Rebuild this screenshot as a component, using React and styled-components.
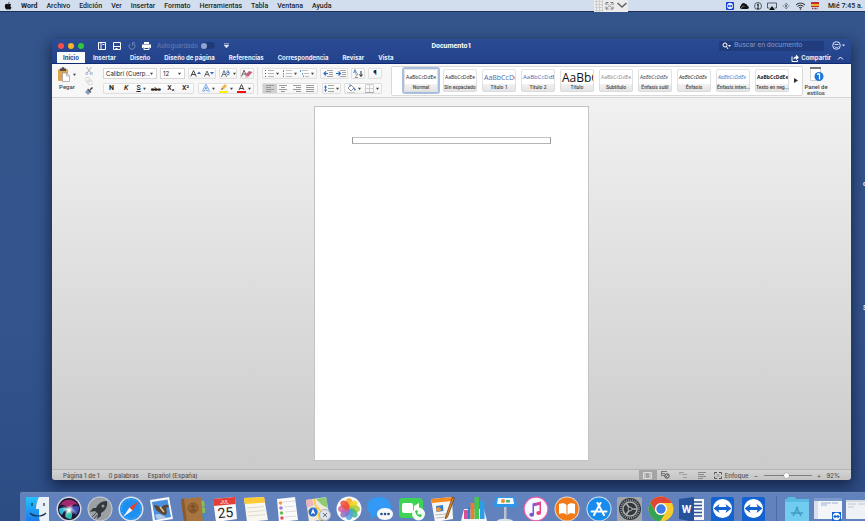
import styled, { createGlobalStyle, css } from 'styled-components';

const GlobalStyle = createGlobalStyle`
	* {
		box-sizing: border-box;
	}

	body {
		margin: 0;
		overflow: hidden;
		font-family: Roboto, 'Liberation Sans', sans-serif;
		font-size: 7px;
		color: #222;
	}

	button,
	input,
	select {
		font: inherit;
		color: inherit;
		margin: 0;
		padding: 0;
		border: 0;
		background: none;
	}

	svg {
		display: block;
		flex-shrink: 0;
	}
`;

const interFont = css`
	font-family: Inter, 'Liberation Sans', sans-serif;
`;

const Desktop = styled.div`
	position: relative;
	display: flex;
	flex-direction: column;
	height: 100vh;
	overflow: hidden;
	background: linear-gradient(#33558b, #33548c 60%, #2c4c84);
`;

const MenuBar = styled.header`
	display: flex;
	align-items: center;
	justify-content: space-between;
	height: 12px;
	flex-shrink: 0;
	padding-left: 4px;
	background: #d2deee;
	border-bottom: 1px solid #1d3058;
	color: #1b1e26;
	white-space: nowrap;
`;

const MenuList = styled.nav`
	display: flex;
	align-items: center;
	gap: 9px;
`;

const MenuItem = styled.button`
	font-weight: ${props => (props.$bold ? 700 : 500)};
	line-height: 10px;
`;

const StatusIcons = styled.div`
	display: flex;
	align-items: center;
	gap: 5px;
`;

const Clock = styled.span`
	width: 37px;
	margin-left: 4px;
	font-weight: 500;
`;

const FloatingBar = styled.div`
	position: absolute;
	top: 0;
	left: 594px;
	display: flex;
	align-items: center;
	width: 34px;
	height: 12px;
	background: #ececec;
`;

const DesktopLabel = styled.span`
	position: absolute;
	left: 863px;
	top: ${props => props.$top}px;
	color: #fff;
	font-weight: 600;
`;

const Window = styled.main`
	display: flex;
	flex-direction: column;
	flex: 1;
	min-height: 0;
	margin: 27px 14px 12px 52px;
	border-radius: 3px;
	overflow: hidden;
	box-shadow: 0 5px 14px 2px rgba(8, 16, 40, 0.6);
`;

const TitleBar = styled.div`
	display: grid;
	grid-template-columns: 1fr auto 1fr;
	align-items: center;
	height: 13px;
	flex-shrink: 0;
	padding: 0 6px;
	background: linear-gradient(#2a4c93, #26478f);
	color: #fff;
`;

const QuickAccess = styled.div`
	display: flex;
	align-items: center;
	gap: 6px;
`;

const Lights = styled.div`
	display: flex;
	gap: 4px;
	margin-right: 7px;
`;

const Light = styled.button`
	width: 6px;
	height: 6px;
	border-radius: 50%;
	background: ${props => props.$color};
`;

const IconButton = styled.button`
	display: flex;
	align-items: center;
	justify-content: center;
	width: 9px;
	height: 10px;
	opacity: ${props => (props.$dim ? 0.35 : 1)};
`;

const AutoSave = styled.label`
	display: flex;
	align-items: center;
	gap: 3px;
	margin-right: 3px;
	font-size: 6px;
	font-weight: 500;
	color: #5f7ab3;
	${interFont}
`;

const Toggle = styled.input`
	appearance: none;
	display: flex;
	align-items: center;
	width: 14px;
	height: 7px;
	border-radius: 4px;
	background: #203a78;

	&::before {
		content: '';
		width: 6px;
		height: 6px;
		border-radius: 50%;
		background: #8ea4d0;
	}
`;

const DocTitle = styled.h1`
	margin: 0;
	font-size: 7px;
	font-weight: 700;
`;

const TitleTools = styled.div`
	display: flex;
	align-items: center;
	justify-content: flex-end;
	gap: 8px;
`;

const SearchBox = styled.label`
	display: flex;
	align-items: center;
	gap: 3px;
	width: 105px;
	height: 10px;
	padding: 0 3px;
	border-radius: 1px;
	background: #203c7c;
`;

const SearchInput = styled.input`
	flex: 1;
	min-width: 0;
	line-height: 9px;
	outline: none;

	&::placeholder {
		color: #8297c4;
	}
`;

const TabBar = styled.div`
	display: flex;
	align-items: flex-end;
	justify-content: space-between;
	height: 12px;
	flex-shrink: 0;
	padding: 0 6px 0 5px;
	background: linear-gradient(#26478f, #22418a);
	color: #eef2fb;
	border-bottom: 1px solid #0f2a74;
	font-size: 6px;
	font-weight: 700;
	${interFont}
`;

const Tabs = styled.div`
	display: flex;
	gap: 14px;
`;

const Tab = styled.button`
	height: 11px;
	line-height: 11px;
	white-space: nowrap;

	${props =>
		props.$active &&
		css`
			margin-right: -6px;
			padding: 0 6px;
			background: #fafafa;
			color: #26468e;
		`}
`;

const ShareButton = styled.button`
	display: flex;
	align-items: center;
	gap: 2px;
	height: 11px;
`;

const Ribbon = styled.section`
	display: flex;
	align-items: center;
	height: 34px;
	flex-shrink: 0;
	padding: 0 22px 0 5px;
	background: #f7f7f7;
	border-bottom: 1px solid #d4d4d4;
`;

const BigButton = styled.button`
	display: flex;
	flex-direction: column;
	align-items: center;
	align-self: flex-start;
	gap: 2px;
	width: ${props => props.$width}px;
	margin-top: 3px;
	font-size: 6px;
	line-height: 6px;
	font-weight: 500;
	color: #444;
	white-space: nowrap;
`;

const BigIcon = styled.span`
	display: flex;
	align-items: center;
	gap: 3px;
`;

const ClipTools = styled.div`
	display: flex;
	flex-direction: column;
	justify-content: space-between;
	height: 30px;
	margin: 0 10px 0 7px;
`;

const ToolColumn = styled.div`
	display: flex;
	flex-direction: column;
	gap: 4px;
`;

const ToolRow = styled.div`
	display: flex;
	justify-content: space-between;
	gap: 3px;
`;

const ToolGroup = styled.div`
	display: flex;
	align-items: center;
	justify-content: space-around;
	width: ${props => props.$width}px;
	height: 11px;
	border: 1px solid #e0e0e0;
	border-radius: 1px;
	background: linear-gradient(#fff, #f4f4f4);
`;

const ToolButton = styled.button`
	display: flex;
	align-items: center;
	justify-content: center;
	gap: 2px;
	flex: 1;
	height: 9px;
	background: ${props => (props.$active ? '#d0d0d0' : 'none')};
	font-size: ${props => (props.$small ? 6 : 7)}px;
	font-weight: ${props => (props.$bold ? 700 : 500)};
	line-height: 9px;
`;

const SelectWrap = styled.span`
	display: flex;
	align-items: center;
	width: ${props => props.$width}px;
	height: 11px;
	padding: 0 3px 0 2px;
	border: 1px solid #d6d6d6;
	background: #fff;
`;

const Select = styled.select`
	appearance: none;
	flex: 1;
	min-width: 0;
	font-size: 6px;
	${interFont}
`;

const Divider = styled.div`
	width: 1px;
	height: 28px;
	margin: 0 4px 0 3px;
	background: #dedede;
`;

const Gallery = styled.div`
	display: flex;
	align-items: center;
	flex: 1;
	min-width: 0;
	height: 30px;
	margin: 0 0 0 9px;
	padding: 0 2px 0 10px;
	border: 1px solid #d9d9d9;
	border-radius: 2px;
	background: #fff;
`;

const StyleList = styled.div`
	display: grid;
	grid-template-columns: repeat(10, 1fr);
	gap: 1px;
	flex: 1;
	min-width: 0;
`;

const StyleCard = styled.button`
	display: flex;
	flex-direction: column;
	height: 27px;
	min-width: 0;
	overflow: hidden;
	border: 2px solid ${props => (props.$active ? '#a9bfe0' : 'transparent')};
	border-radius: 3px;
`;

const Preview = styled.span`
	display: flex;
	align-items: center;
	align-self: stretch;
	flex: 1;
	padding-left: 1px;
	overflow: hidden;
	border: 1px solid #e2e2e2;
	border-bottom: 0;
	border-radius: 2px 2px 0 0;
	font-family: 'Open Sans', sans-serif;
	font-size: ${props => props.$size}px;
	font-weight: ${props => (props.$bold ? 700 : 500)};
	font-style: ${props => (props.$italic ? 'italic' : 'normal')};
	color: ${props => props.$color};
	line-height: 15px;
	white-space: nowrap;
`;

const StyleName = styled.span`
	align-self: stretch;
	height: 8px;
	border: 1px solid #dcdcdc;
	border-top: 0;
	border-radius: 0 0 2px 2px;
	background: linear-gradient(#f2f2f2, #e4e4e4);
	font-size: 5px;
	font-weight: 500;
	line-height: 7px;
	text-align: center;
	color: #444;
	white-space: nowrap;
`;

const Canvas = styled.section`
	display: flex;
	justify-content: center;
	flex: 1;
	min-height: 0;
	padding: 8px 0;
	background: linear-gradient(#f1f1f1, #cbcbcb);
`;

const Page = styled.article`
	width: 275px;
	padding: 30px 37px;
	background: #fff;
	border: 1px solid #c4c4c4;
`;

const TextFrame = styled.div`
	height: 7px;
	border: 1px solid #999;
	border-top-color: #c2c2c2;
	border-bottom-color: #b4b4b4;
`;

const StatusBar = styled.footer`
	display: flex;
	align-items: center;
	justify-content: space-between;
	height: 11px;
	flex-shrink: 0;
	padding: 0 11px;
	background: linear-gradient(#d3d3d3, #c4c4c4);
	border-top: 1px solid #b4b4b4;
	font-size: 6px;
	font-weight: 500;
	color: #505050;
	${interFont}
`;

const StatusGroup = styled.div`
	display: flex;
	align-items: center;
	gap: ${props => props.$gap}px;
`;

const ViewButton = styled.button`
	display: flex;
	align-items: center;
	justify-content: center;
	gap: 3px;
	min-width: 18px;
	height: 10px;
	background: ${props => (props.$active ? '#a4a4a4' : 'none')};
`;

const ZoomSlider = styled.input`
	appearance: none;
	width: 48px;
	height: 8px;

	&::-webkit-slider-runnable-track {
		height: 1px;
		background: #808080;
	}

	&::-webkit-slider-thumb {
		appearance: none;
		width: 5px;
		height: 5px;
		margin-top: -2px;
		border-radius: 50%;
		background: #fff;
		box-shadow: 0 0 1px #555;
	}
`;

const Dock = styled.nav`
	position: relative;
	display: flex;
	height: 29px;
	flex-shrink: 0;
	margin-left: 20px;
	padding: 3px 0 0 2px;
	overflow: hidden;
	border-top: 1px solid #7088b8;
	border-radius: 2px 0 0 0;
	background: #6182bd;
`;

const DockApps = styled.div`
	display: grid;
	grid-template-columns: repeat(24, 1fr);
	flex: 1;
`;

const DockTray = styled.div`
	display: flex;
	gap: 4px;
	width: 89px;
	padding-left: 7px;
	border-left: 1px solid #4d6ba3;
	margin-left: 6px;
`;

const DockIcon = styled.button`
	display: flex;
	justify-content: center;
	height: 26px;
`;

const Caret = ({ color = '#444', size = 3 }) => (
	<svg width={size} height={size} viewBox="0 0 4 4">
		<path d="M0 1h4L2 4z" fill={color} />
	</svg>
);

const icons = {
	apple: (
		<svg width="8" height="8" viewBox="0 0 16 18">
			<path
				d="M11.5 0c.1 1.7-1.5 3.7-3.3 3.7C8 2 9.7.2 11.5 0zM8.3 5c.8 0 1.9-1 3.5-1 1.4 0 2.6.8 3.3 1.8-2.7 1.7-2.2 5.2.7 6.4-.7 2-2.3 4.800-4 4.800-1.300 0-1.800-.8-3.300-.8S6.600 17 5.400 17C3.300 17 .9 13 .9 9.500.9 6 3 4.100 5.100 4.100 6.600 4.100 7.500 5 8.300 5z"
				fill="#111"
			/>
		</svg>
	),
	teamviewer: (
		<svg width="8" height="8" viewBox="0 0 16 16">
			<rect width="16" height="16" rx="2" fill="#123fd4" />
			<circle cx="8" cy="8" r="6" fill="#fff" />
			<path d="M2.500 8l4-3v2h3V5l4 3-4 3V9h-3v2z" fill="#123fd4" />
		</svg>
	),
	cloud: (
		<svg width="10" height="8" viewBox="0 0 20 14">
			<path d="M4 13a4 4 0 0 1 0-7 5 5 0 0 1 9-3 4 4 0 0 1 4 4c4 1 3 6 0 6z" fill="#111" />
			<path d="M5 12c0-5 4-6 6-4" stroke="#d2deee" fill="none" />
		</svg>
	),
	info: (
		<svg width="8" height="8" viewBox="0 0 16 16">
			<circle cx="8" cy="8" r="7" fill="none" stroke="#333" strokeWidth="1.5" />
			<path d="M8 3v10M6 6h4M6.500 13h3" stroke="#222" strokeWidth="2" />
		</svg>
	),
	airplay: (
		<svg width="10" height="8" viewBox="0 0 20 16">
			<path d="M5 12H1V2h18v10h-4" fill="none" stroke="#333" strokeWidth="1.5" />
			<path d="M10 8l6 8H4z" fill="#111" />
		</svg>
	),
	bluetooth: (
		<svg width="8" height="8" viewBox="0 0 16 16">
			<path d="M5 5l6 6-3 3V2l3 3-6 6M1 8h3M12 8h3" fill="none" stroke="#555" strokeWidth="1.3" />
		</svg>
	),
	wifi: (
		<svg width="11" height="8" viewBox="0 0 20 16">
			<path d="M1 6c5-5 13-5 18 0M4 9c4-3.500 8-3.500 12 0M7 12c2-2 4-2 6 0" fill="none" stroke="#222" strokeWidth="2" />
			<circle cx="10" cy="14" r="1.5" fill="#222" />
		</svg>
	),
	flag: (
		<svg width="8" height="8" viewBox="0 0 8 8">
			<path d="M0 0h8v2H0zM0 4h8v1H0z" fill="#c42b31" />
			<path d="M0 2h8v2H0z" fill="#e6b52c" />
			<path d="M1 6.500h6" stroke="#8f3c47" strokeWidth="1.5" strokeDasharray="1 .5" />
		</svg>
	),
	tools: (
		<svg width="34" height="12" viewBox="0 0 34 12">
			<path d="M1 1.500h8M1 4.500h8M1 7.500h8M1 10.500h8M2.500 0v12M5.500 0v12M8.500 0v12" stroke="#cfcfcf" />
			<path d="M12 5V2.500h2.500M16.500 2.500H19V5M19 6.500V9h-2.500M14.500 9H12V6.500" fill="none" stroke="#777" />
			<path d="M13 3.500l5 4.500M18 3.500L13 8" stroke="#aaa" />
			<path d="M23.500 3l4.500 4 4.500-4" fill="none" stroke="#666" strokeWidth="1.6" />
		</svg>
	),
	panel: (
		<svg width="8" height="8" viewBox="0 0 8 8">
			<path d="M.5.5h7v7h-7zM3 .5v7M4.500 2.500h2" fill="none" stroke="#fff" />
		</svg>
	),
	save: (
		<svg width="8" height="8" viewBox="0 0 8 8">
			<path d="M.5.5h7v7h-7z" fill="none" stroke="#fff" />
			<path d="M1 4h6v1H1zM2.500 6h2v2h-2z" fill="#fff" />
		</svg>
	),
	undo: (
		<svg width="8" height="8" viewBox="0 0 8 8">
			<path d="M2 2a3 3 0 1 0 4 0M4.500 3.500V.8H7" fill="none" stroke="#fff" />
		</svg>
	),
	print: (
		<svg width="9" height="8" viewBox="0 0 9 8">
			<path d="M2 0h5v2H2zM0 2.500h9V6H7.500V5h-6v1H0z" fill="#fff" />
			<path d="M2 5.500h5v2H2z" fill="none" stroke="#fff" />
		</svg>
	),
	search: (
		<svg width="9" height="8" viewBox="0 0 9 8">
			<circle cx="3" cy="3" r="2" fill="none" stroke="#fff" />
			<path d="M4.500 4.500L6 7" stroke="#fff" />
			<path d="M6 3h3L7.500 5z" fill="#fff" />
		</svg>
	),
	smile: (
		<svg width="13" height="9" viewBox="0 0 13 9">
			<circle cx="4.500" cy="4.500" r="3.800" fill="none" stroke="#dfe6f6" />
			<path d="M2.500 3.500h4M2.500 5.500c1 1.500 3 1.500 4 0" fill="none" stroke="#dfe6f6" strokeWidth=".9" />
			<path d="M10 3.500h3l-1.500 2z" fill="#dfe6f6" />
		</svg>
	),
	share: (
		<svg width="8" height="8" viewBox="0 0 8 8">
			<path d="M1 2.500v5h5.500V6" fill="none" stroke="#fff" />
			<path d="M2.500 5.500c0-2 1-3 2.500-3V.5L8 3.500l-3 2.500V4.500c-1 0-2 0-2.500 1z" fill="#fff" />
		</svg>
	),
	paste: (
		<svg width="12" height="15" viewBox="0 0 12 15">
			<rect x="0" y="2" width="10" height="12" rx="1" fill="#e0a54c" />
			<path d="M2 1.500h1.500a1.500 1.500 0 0 1 3 0H8V4H2z" fill="#4d4d4d" />
			<path d="M4.500 6h4l3 3v5.500h-7z" fill="#fff" stroke="#999" strokeWidth=".7" />
			<path d="M8.500 6v3h3" fill="none" stroke="#999" strokeWidth=".7" />
		</svg>
	),
	cut: (
		<svg width="8" height="8" viewBox="0 0 8 8">
			<path d="M1.500 0l4 5.500M6.500 0l-4 5.500" stroke="#aaa" strokeWidth=".9" />
			<circle cx="1.700" cy="6.500" r="1.100" fill="none" stroke="#83a4cb" strokeWidth=".8" />
			<circle cx="6.300" cy="6.500" r="1.100" fill="none" stroke="#83a4cb" strokeWidth=".8" />
		</svg>
	),
	copy: (
		<svg width="8" height="8" viewBox="0 0 8 8">
			<path d="M1 .5h3l1 1V5H1zM3 3h3l1 1v3.500H3z" fill="#fafafa" stroke="#ccc" strokeWidth=".7" />
		</svg>
	),
	brush: (
		<svg width="8" height="8" viewBox="0 0 8 8">
			<path d="M7.500.5L5 3" stroke="#444" strokeWidth="1.5" />
			<path d="M3 1.500L6.500 5 5 6 2 3z" fill="#555" />
			<path d="M2 3l3 3-2 2-3-3z" fill="#7f9bc2" />
		</svg>
	),
	growFont: (
		<svg width="11" height="9" viewBox="0 0 11 9">
			<path d="M.8 7.500L3.500 1.500l2.700 6M1.500 5.500h4" fill="none" stroke="#444" />
			<path d="M7 5h4L9 2.500z" fill="#2b6cc4" />
		</svg>
	),
	shrinkFont: (
		<svg width="11" height="9" viewBox="0 0 11 9">
			<path d="M1.500 7.500L4 2l2.500 5.500M2.500 5.500h3" fill="none" stroke="#555" strokeWidth=".9" />
			<path d="M7 3h4L9 5.500z" fill="#2b6cc4" />
		</svg>
	),
	changeCase: (
		<svg width="10" height="9" viewBox="0 0 10 9">
			<path d="M.5 8L3 1.500 5.500 8M1.500 5.500h3" fill="none" stroke="#666" strokeWidth=".9" />
			<path d="M5.500 2.500a1.600 1.600 0 0 1 2.500 0v3M8 4a1.300 1.300 0 1 0 0 1" fill="none" stroke="#3b76c4" strokeWidth=".9" />
		</svg>
	),
	eraser: (
		<svg width="12" height="9" viewBox="0 0 12 9">
			<path d="M.5 7.500L3 1l2.500 6M1.500 5h3" fill="none" stroke="#666" />
			<path d="M4 6l4-4 3.500 1-4 4.500L5 8z" fill="#c5607a" />
			<path d="M4 6l3.500 1.500L6.500 9 4 8z" fill="#e9b3c0" />
		</svg>
	),
	textEffect: (
		<svg width="8" height="9" viewBox="0 0 8 9">
			<path d="M1 7.500L4 1.500l3 6M2 5.500h4" fill="none" stroke="#5f9ade" strokeWidth="2" />
			<path d="M1 7.500L4 1.500l3 6M2 5.500h4" fill="none" stroke="#fff" strokeWidth=".7" />
		</svg>
	),
	highlight: (
		<svg width="9" height="9" viewBox="0 0 9 9">
			<path d="M0 7h9v2H0z" fill="#fff200" />
			<path d="M2 6l1-3 3-3 2 2-3 3z" fill="#f0b74a" />
			<path d="M2 6l1-2 1 1z" fill="#444" />
		</svg>
	),
	fontColor: (
		<svg width="9" height="9" viewBox="0 0 9 9">
			<path d="M2 6L4.500.5 7 6M3 4.500h3" fill="none" stroke="#444" />
			<path d="M0 7h9v2H0z" fill="#f20d0d" />
		</svg>
	),
	bullets: (
		<svg width="9" height="7" viewBox="0 0 9 7">
			<path d="M3 .5h6M3 3.500h6M3 6.500h6" stroke="#b5b5b5" />
			<path d="M0 0h1v1H0zM0 3h1v1H0zM0 6h1v1H0z" fill="#2f6bbd" />
		</svg>
	),
	numbers: (
		<svg width="9" height="7" viewBox="0 0 9 7">
			<path d="M3 .5h6M3 3.500h6M3 6.500h6" stroke="#c2c2c2" />
			<path d="M.5 0v2M.5 3v1.500M.5 5.500V7" stroke="#5d8ac9" />
		</svg>
	),
	multilevel: (
		<svg width="9" height="7" viewBox="0 0 9 7">
			<path d="M2 .5h6M4 3.500h5M5 6.500h4" stroke="#c2c2c2" />
			<path d="M.5 0v2M2.500 3v1.500M3.500 5.500V7" stroke="#5d8ac9" />
		</svg>
	),
	outdent: (
		<svg width="10" height="7" viewBox="0 0 10 7">
			<path d="M4 .5h6M6 2.500h4M6 4.500h4M4 6.500h6" stroke="#a5a5a5" />
			<path d="M5 3.500H1M3 1.500l-2 2 2 2" fill="none" stroke="#2b6cc4" strokeWidth="1.2" />
		</svg>
	),
	indent: (
		<svg width="10" height="7" viewBox="0 0 10 7">
			<path d="M4 .5h6M6 2.500h4M6 4.500h4M4 6.500h6" stroke="#a5a5a5" />
			<path d="M0 3.500h4M2.500 1.500l2 2-2 2" fill="none" stroke="#2b6cc4" strokeWidth="1.2" />
		</svg>
	),
	sort: (
		<svg width="10" height="9" viewBox="0 0 10 9">
			<path d="M.5 4L2 .5 3.500 4M1 3h2" fill="none" stroke="#3b76c4" strokeWidth=".8" />
			<path d="M2 5h3L2 8.500h3" fill="none" stroke="#888" strokeWidth=".8" />
			<path d="M8 2v5M6.500 5.500L8 7.500l1.500-2" fill="none" stroke="#222" />
		</svg>
	),
	spacing: (
		<svg width="10" height="7" viewBox="0 0 10 7">
			<path d="M4 .5h6M4 3.500h6M4 6.500h6" stroke="#a5a5a5" />
			<path d="M1.500 0L3 2.500H0zM1.500 7L3 4.500H0zM1 2h1v3H1z" fill="#2b6cc4" />
		</svg>
	),
	bucket: (
		<svg width="9" height="9" viewBox="0 0 9 9">
			<path d="M1 4l3-3 3 3-3 3z" fill="#fff" stroke="#777" strokeWidth=".8" />
			<path d="M3 0v3M7 4c2 1 1.500 3 .5 2z" stroke="#4a7cc2" fill="#4a7cc2" strokeWidth=".8" />
			<path d="M0 8.500h8" stroke="#ccc" />
		</svg>
	),
	borders: (
		<svg width="9" height="9" viewBox="0 0 9 9">
			<path d="M.5.5h8v8h-8zM4.500.5v8M.5 4.500h8" fill="none" stroke="#cfcfcf" />
			<path d="M0 8.500h9" stroke="#aaa" />
		</svg>
	),
	stylePane: (
		<svg width="15" height="15" viewBox="0 0 15 15">
			<path d="M1.500.5h10v13h-10z" fill="#fff" stroke="#d0d0d0" />
			<path d="M1 0h11v2H1z" fill="#777" />
			<circle cx="10" cy="9.500" r="4.500" fill="#1976d8" />
			<path d="M8.500 8a1.300 1.300 0 0 1 2-1v5.500" fill="none" stroke="#fff" strokeWidth="1.3" />
		</svg>
	),
	printView: (
		<svg width="9" height="7" viewBox="0 0 9 7">
			<path d="M.5.5h8v6h-8zM2 1v5M7 1v5" fill="none" stroke="#e2e2e2" strokeWidth=".9" />
		</svg>
	),
	webView: (
		<svg width="9" height="8" viewBox="0 0 9 8">
			<path d="M0 .5h6M0 2.500h4M0 4.500h4M.5 0v5" stroke="#777" />
			<circle cx="6" cy="5" r="2.200" fill="#ccc" stroke="#444" />
			<path d="M4.500 6.500l3-3" stroke="#444" strokeWidth=".7" />
		</svg>
	),
	outline: (
		<svg width="9" height="8" viewBox="0 0 9 8">
			<path d="M0 1.500h5M3 3.500h5M4 6.500h4M1 1v3" stroke="#999" strokeWidth=".9" />
		</svg>
	),
	draft: (
		<svg width="8" height="8" viewBox="0 0 8 8">
			<path d="M0 1.500h8M0 3.500h6M0 5.500h8M0 7.500h5" stroke="#888" />
		</svg>
	),
	focus: (
		<svg width="8" height="7" viewBox="0 0 8 7">
			<path d="M.5 2.500v-2H3M5 .5h2.500v2M7.500 4.500v2H5M3 6.500H.5v-2" fill="none" stroke="#555" />
			<path d="M2.500 2h3v3h-3z" fill="#aaa" />
		</svg>
	),
};

const align = {
	left: 'M0 .5h8M0 2.500h5M0 4.500h8M0 6.500h5',
	center: 'M0 .5h8M2 2.500h4M0 4.500h8M2 6.500h4',
	right: 'M0 .5h8M3 2.500h5M0 4.500h8M3 6.500h5',
	justify: 'M0 .5h8M0 2.500h8M0 4.500h8M0 6.500h8',
};

const AlignIcon = ({ kind }) => (
	<svg width="8" height="7" viewBox="0 0 8 7">
		<path d={align[kind]} stroke="#9a9a9a" />
	</svg>
);

const petals = ['#f6a623', '#f7d51d', '#a5cd39', '#3fb68b', '#4aa3df', '#8571c4', '#cf5fa3', '#ee4a36'];

const TeamViewerApp = (
	<>
		<rect x="1" y="1" width="23" height="25" rx="2" fill="#1262cf" />
		<circle cx="12.500" cy="12.500" r="9.500" fill="#fff" />
		<path d="M3.500 12.500l6-4.500-1 3h8l-1-3 6 4.500-6 4.500 1-3h-8l1 3z" fill="#1262cf" />
	</>
);

const dockApps = [
	{
		name: 'Finder',
		art: (
			<>
				<defs>
					<linearGradient id="finder" x2="0" y2="1">
						<stop offset="0" stopColor="#25c3fb" />
						<stop offset="1" stopColor="#1b78ec" />
					</linearGradient>
				</defs>
				<path d="M1 1h13c-2 4-3 8-3 12h3c0 5 0 8 1 13H1z" fill="url(#finder)" />
				<path d="M14 1h10v25h-9c-1-4-1-7-1-13h-3c0-4 1-8 3-12z" fill="#eaf0f7" />
				<path d="M7 7v3M19 7v3M5 17c4 4 12 4 16 0" fill="none" stroke="#17344f" strokeWidth="1.2" />
			</>
		),
	},
	{
		name: 'Siri',
		art: (
			<>
				<defs>
					<radialGradient id="siri">
						<stop offset="0" stopColor="#fff" />
						<stop offset=".4" stopColor="#fff" stopOpacity=".5" />
						<stop offset="1" stopColor="#fff" stopOpacity="0" />
					</radialGradient>
				</defs>
				<circle cx="13" cy="13" r="12.500" fill="#d5d7e2" />
				<circle cx="13" cy="13" r="11" fill="#1d1a38" />
				<path d="M4 9c4-7 14-7 18 0-3-2-6 0-9 4-3-4-6-5-9-4z" fill="#a3286f" />
				<path d="M3 13c3-2 7-1 10 0-4 1-6 3-7 6-2-1-3-4-3-6z" fill="#2bb6d2" />
				<path d="M13 13c4-3 7-4 10-2 0 3-1 6-3 8-2-3-4-5-7-6z" fill="#3f4fb8" />
				<path d="M13 13c3 3 4 6 2 10-3 0-5-1-6-3 1-3 2-5 4-7z" fill="#35bfae" />
				<ellipse cx="13" cy="14" rx="8" ry="4" fill="url(#siri)" transform="rotate(20 13 14)" />
				<ellipse cx="13" cy="14" rx="7" ry="3" fill="url(#siri)" transform="rotate(-55 13 14)" />
			</>
		),
	},
	{
		name: 'Launchpad',
		art: (
			<>
				<circle cx="13" cy="13" r="12.500" fill="#ccd0d3" />
				<circle cx="13" cy="13" r="11.500" fill="#9aa0a5" />
				<path d="M20 5c-6 0-9 3-11 7H6l-3 4 5-1 3 3-1 5 4-3v-3c4-2 7-6 6-12z" fill="#33383d" />
				<path d="M5 21l4-4M7 23l3-4" stroke="#474d52" />
				<circle cx="16" cy="10" r="1.500" fill="#92999e" />
			</>
		),
	},
	{
		name: 'Safari',
		art: (
			<>
				<circle cx="13" cy="13" r="12.500" fill="#dfe5ee" />
				<circle cx="13" cy="13" r="11" fill="#1d8ff0" />
				<circle cx="13" cy="13" r="9.500" fill="none" stroke="#9dcffa" strokeDasharray=".6 2" />
				<path d="M21 5l-6.500 9.500-3-3z" fill="#f33c31" />
				<path d="M5 21l6.500-9.500 3 3z" fill="#f4f4f4" />
			</>
		),
	},
	{
		name: 'Mail',
		art: (
			<>
				<path d="M1 4l19-3 4 22-20 3z" fill="#f7f8fa" />
				<path d="M3 6l15.500-2.500L22 21 6 24z" fill="#4a90de" />
				<path d="M5 9c3 0 5 1 7 3 2-3 4-4 7-3l1 2-3 1c1 3 1 5 0 7-3 0-5-1-7-3-3-1-4-4-5-7z" fill="#5f452f" />
				<path d="M6 19c3-2 7-1 11 3L8 23.500z" fill="#b2cae6" />
				<path d="M11 11l4 5" stroke="#e0cba4" strokeWidth="1.5" />
			</>
		),
	},
	{
		name: 'Contactos',
		art: (
			<>
				<path d="M20 4l4 1 1 5-3 1zM21 11l4 1v5h-3z" fill="#8bbd55" />
				<path d="M22 17l3 1v5h-3z" fill="#388fc9" />
				<path d="M1 3l20-2 2 24-19 1z" fill="#a87440" />
				<path d="M1 3l3-.3L7 26H4z" fill="#8b5b2f" />
				<circle cx="13" cy="12" r="5" fill="#966433" stroke="#85552a" />
				<circle cx="13" cy="10.500" r="2" fill="#7d4f25" />
				<path d="M9.500 15.500c1-3.500 6-3.500 7 0z" fill="#7d4f25" />
			</>
		),
	},
	{
		name: 'Calendario',
		art: (
			<>
				<path d="M1 3l22-2 2 22-21 3z" fill="#fafafa" />
				<path d="M1 3l22-2 .7 7L1.600 10z" fill="#e33e37" />
				<g transform="rotate(-5 13 13)">
					<text x="13" y="7.500" fontSize="5" fill="#fff" textAnchor="middle">
						JUL
					</text>
					<text x="13" y="21.500" fontSize="14" fill="#292929" textAnchor="middle">
						25
					</text>
				</g>
			</>
		),
	},
	{
		name: 'Notas',
		art: (
			<>
				<path d="M1 2l20-1 4 23-21 2z" fill="#f8f6ee" />
				<path d="M1 2l20-1 1 5.500L1.800 8z" fill="#fdca34" />
				<path d="M4 12l17-1.500M4.500 16L22 14.500M5 20l17.500-1.500" stroke="#dedbd0" />
			</>
		),
	},
	{
		name: 'Recordatorios',
		art: (
			<>
				<path d="M3 3l18-2 3 23-19 2z" fill="#fafafa" />
				<path d="M9 6l12-1M10 11l11-1M11 16l11-1M11 21l11-1" stroke="#dcdcdc" />
				<circle cx="6.500" cy="7" r="1.800" fill="#f39a34" />
				<circle cx="7" cy="12" r="1.800" fill="#9a7ed3" />
				<circle cx="7.500" cy="17" r="1.800" fill="#61be54" />
				<circle cx="8" cy="22" r="1.800" fill="#e75360" />
			</>
		),
	},
	{
		name: 'Mapas',
		art: (
			<>
				<path d="M1 4l20-3 4 21-21 4z" fill="#eee9d9" />
				<path d="M11 3l10-2 2 11-6-3z" fill="#8dcc72" />
				<path d="M1 4l6-1 2 6-7 3z" fill="#efb4b7" />
				<path d="M3 15l10-3 9 10M9 3l6 22" fill="none" stroke="#f8ca45" strokeWidth="1.7" />
				<circle cx="8" cy="16" r="4.500" fill="#266cce" />
				<path d="M8 12.500l2.300 6-2.300-1.500-2.300 1.500z" fill="#fff" />
				<circle cx="20" cy="19" r="5.500" fill="#dfe4ea" stroke="#a5b3c4" />
				<path d="M18 17l4 4M22 17l-4 4" stroke="#61728d" />
			</>
		),
	},
	{
		name: 'Fotos',
		art: (
			<>
				<circle cx="13" cy="13" r="12.500" fill="#fafafa" />
				{petals.map((color, i) => (
					<ellipse
						key={color}
						cx="13"
						cy="7.500"
						rx="3.800"
						ry="5.500"
						fill={color}
						opacity=".85"
						transform={`rotate(${i * 45} 13 13)`}
					/>
				))}
			</>
		),
	},
	{
		name: 'Mensajes',
		art: (
			<>
				<path d="M12 1c7 0 12 4 12 10s-5 10-12 10c-2 0-4-.4-5-.8L3 23l1-5C2 16 0 14 0 11 0 5 5 1 12 1z" fill="#3299f5" />
				<path d="M18 12c5 0 8 3 8 6s-3 6-8 6-8-3-8-6 3-6 8-6z" fill="#f8fafd" />
				<circle cx="14.500" cy="18" r="1.300" fill="#23528a" />
				<circle cx="18" cy="18" r="1.300" fill="#23528a" />
				<circle cx="21.500" cy="18" r="1.300" fill="#23528a" />
			</>
		),
	},
	{
		name: 'FaceTime',
		art: (
			<>
				<rect x="0" y="2" width="24" height="20" rx="4" fill="#3fd353" />
				<rect x="3" y="7" width="11" height="10" rx="2" fill="#fff" />
				<path d="M15 10l5-3v10l-5-3z" fill="#fff" />
				<circle cx="19.500" cy="18" r="6.500" fill="#f5fff5" />
				<path d="M16 15c1 4 3 6 6 6l1-2-2-1-1 1-2-2 1-1-1-2z" fill="#38c74e" />
			</>
		),
	},
	{
		name: 'Pages',
		art: (
			<>
				<path d="M1 3l21-2 1 22-18 3z" fill="#f6f6f6" />
				<path d="M1 3l21-2v4L1.600 7z" fill="#f48a21" />
				<path d="M6 10l7-1 .5 6-7 1z" fill="#3480c7" />
				<path d="M6 12l3-1 3 3-5 2z" fill="#f39335" />
				<path d="M5 19l11-1M6 22l10-1" stroke="#bbb" />
				<path d="M22.500 1l2 1-7 19-2 2 .3-3z" fill="#e4841b" stroke="#573a24" strokeWidth=".7" />
			</>
		),
	},
	{
		name: 'Numbers',
		art: (
			<>
				<path d="M3 13h20l3 12H0z" fill="#f5f5f5" />
				<path d="M3 14h4v9H3z" fill="#d8509a" />
				<path d="M7 11h2.500v12H7z" fill="#2d81d6" />
				<path d="M9.500 7h4v16h-4z" fill="#ef7a32" />
				<path d="M13.500 1h4.500v22h-4.500z" fill="#49c54b" />
				<path d="M19 5h4.500v18H19z" fill="#2e9ce6" />
			</>
		),
	},
	{
		name: 'Keynote',
		art: (
			<>
				<path d="M4 1h19l2 10H1z" fill="#2b98ea" />
				<path d="M6 2h15l1 6H5z" fill="#f4f8fb" />
				<circle cx="11" cy="5" r="2" fill="#ec8c33" />
				<path d="M14 4h4v2.500h-4z" fill="#4cb77a" />
				<path d="M12 11h2.500v12H12z" fill="#b9c3ce" />
				<path d="M5 25c1-3 15-3 16 0z" fill="#dbe1e7" />
			</>
		),
	},
	{
		name: 'iTunes',
		art: (
			<>
				<defs>
					<linearGradient id="note" x2="1" y2="0">
						<stop offset="0" stopColor="#7a55dd" />
						<stop offset="1" stopColor="#f0427c" />
					</linearGradient>
				</defs>
				<circle cx="13" cy="13" r="12.500" fill="#e75bad" />
				<circle cx="13" cy="13" r="11.300" fill="#faf9fd" />
				<path d="M9.500 19V7.500L18 5.500V17h-1.500V9L11 10.300V19z" fill="url(#note)" />
				<ellipse cx="8.700" cy="18.800" rx="2.400" ry="2" fill="#7a55ce" />
				<ellipse cx="15.700" cy="17" rx="2.400" ry="2" fill="#e54683" />
			</>
		),
	},
	{
		name: 'Libros',
		art: (
			<>
				<circle cx="13" cy="13" r="12.500" fill="#e6d9cf" />
				<circle cx="13" cy="13" r="11.500" fill="#f27a18" />
				<path d="M5 8c3-1 6-1 7.500 1v10C11 17 8 17 5 18zM21 8c-3-1-6-1-7.500 1v10c1.500-2 4.500-2 7.500-1z" fill="#fff" />
			</>
		),
	},
	{
		name: 'App Store',
		art: (
			<>
				<circle cx="13" cy="13" r="12.500" fill="#dce5ef" />
				<circle cx="13" cy="13" r="11.500" fill="#188ced" />
				<path
					d="M8 19l6.500-12M11.500 7L18 19M5.500 15.500h10M18 15.500h2.500"
					stroke="#fff"
					strokeWidth="2"
					strokeLinecap="round"
				/>
			</>
		),
	},
	{
		name: 'Preferencias',
		art: (
			<>
				<rect x="0" y="1" width="25" height="26" rx="2" fill="#a0a6ab" />
				<circle cx="13" cy="13" r="11" fill="#34373a" />
				<circle cx="13" cy="13" r="9" fill="none" stroke="#888e94" strokeWidth="2" strokeDasharray="1 1" />
				<circle cx="13" cy="13" r="7" fill="none" stroke="#a7adb1" strokeWidth="1.5" />
				<path d="M13 13h7M13 13l-4-6M13 13l-4 6" stroke="#a7adb1" strokeWidth="1.7" />
				<circle cx="13" cy="13" r="2" fill="#34373a" stroke="#a7adb1" />
			</>
		),
	},
	{
		name: 'Chrome',
		art: (
			<>
				<circle cx="13" cy="13" r="12.500" fill="#f9ca2b" />
				<path d="M2.200 6.700A12.500 12.500 0 0 1 24 7H13a6 6 0 0 0-5.500 8z" fill="#e04535" />
				<path d="M2.200 6.700A12.500 12.500 0 0 0 12 25.500L18 16a6 6 0 0 1-10.400 0z" fill="#33a455" />
				<circle cx="13" cy="13" r="6" fill="#fff" />
				<circle cx="13" cy="13" r="4.700" fill="#3c7de8" />
			</>
		),
	},
	{
		name: 'Word',
		art: (
			<>
				<path d="M12 3h13v21H12z" fill="#f4f6fa" />
				<path d="M15 6h8M15 9.500h8M15 13h8M15 16.500h8M15 20h8" stroke="#2c5298" strokeWidth="1.3" />
				<path d="M0 3l15-2v25L0 23z" fill="#26529c" />
				<text x="7.500" y="17" fontSize="11" fontWeight="700" fill="#fff" textAnchor="middle">
					W
				</text>
			</>
		),
	},
	{ name: 'TeamViewer', art: TeamViewerApp },
	{ name: 'TeamViewer Host', art: TeamViewerApp },
];

const menus = ['Word', 'Archivo', 'Edición', 'Ver', 'Insertar', 'Formato', 'Herramientas', 'Tabla', 'Ventana', 'Ayuda'];

const tabs = [
	'Inicio',
	'Insertar',
	'Diseño',
	'Diseño de página',
	'Referencias',
	'Correspondencia',
	'Revisar',
	'Vista',
];

const textStyles = [
	{ name: 'Normal' },
	{ name: 'Sin espaciado' },
	{ name: 'Título 1', size: 7, color: '#4a6cae' },
	{ name: 'Título 2', size: 6, color: '#4a6cae' },
	{ name: 'Título', size: 12, color: '#111' },
	{ name: 'Subtítulo', color: '#888' },
	{ name: 'Énfasis sutil', color: '#444', italic: true },
	{ name: 'Énfasis', italic: true },
	{ name: 'Énfasis inten...', color: '#4472c4', italic: true },
	{ name: 'Texto en neg...', bold: true },
];

const Tool = ({ icon, label, caret, children, ...rest }) => (
	<ToolButton aria-label={label} {...rest}>
		{icon ? icons[icon] : children}
		{caret && <Caret />}
	</ToolButton>
);

const SystemMenu = () => (
	<MenuBar>
		<MenuList>
			{icons.apple}
			{menus.map((menu, i) => (
				<MenuItem key={menu} $bold={i === 0}>
					{menu}
				</MenuItem>
			))}
		</MenuList>
		<StatusIcons>
			{icons.teamviewer}
			{icons.cloud}
			{icons.info}
			{icons.airplay}
			{icons.bluetooth}
			{icons.wifi}
			{icons.flag}
			<Clock>Mié 7:45 a.</Clock>
		</StatusIcons>
		<FloatingBar>{icons.tools}</FloatingBar>
	</MenuBar>
);

const HomeRibbon = () => (
	<Ribbon>
		<BigButton $width={20}>
			<BigIcon>
				{icons.paste}
				<Caret />
			</BigIcon>
			<span>Pegar</span>
		</BigButton>
		<ClipTools>
			<IconButton aria-label="Cortar">{icons.cut}</IconButton>
			<IconButton aria-label="Copiar">{icons.copy}</IconButton>
			<IconButton aria-label="Copiar formato">{icons.brush}</IconButton>
		</ClipTools>

		<ToolColumn>
			<ToolRow>
				<SelectWrap $width={54}>
					<Select aria-label="Fuente">
						<option>Calibri (Cuerp...</option>
					</Select>
					<Caret />
				</SelectWrap>
				<SelectWrap $width={25}>
					<Select aria-label="Tamaño">
						<option>12</option>
					</Select>
					<Caret />
				</SelectWrap>
				<ToolGroup $width={28}>
					<Tool icon="growFont" label="Aumentar fuente" />
					<Tool icon="shrinkFont" label="Reducir fuente" />
				</ToolGroup>
				<ToolGroup $width={18}>
					<Tool icon="changeCase" label="Mayúsculas" caret />
				</ToolGroup>
				<ToolGroup $width={14}>
					<Tool icon="eraser" label="Borrar formato" />
				</ToolGroup>
			</ToolRow>
			<ToolRow>
				<ToolGroup $width={91}>
					<Tool $bold>N</Tool>
					<Tool>
						<i>K</i>
					</Tool>
					<Tool caret>
						<u>S</u>
					</Tool>
					<Tool $small>
						<s>abc</s>
					</Tool>
					<Tool>
						<span>X₂</span>
					</Tool>
					<Tool>
						<span>X²</span>
					</Tool>
				</ToolGroup>
				<ToolGroup $width={56}>
					<Tool icon="textEffect" label="Efectos de texto" caret />
					<Tool icon="highlight" label="Resaltado" caret />
					<Tool icon="fontColor" label="Color de fuente" caret />
				</ToolGroup>
			</ToolRow>
		</ToolColumn>

		<Divider />

		<ToolColumn>
			<ToolRow>
				<ToolGroup $width={55}>
					<Tool icon="bullets" label="Viñetas" caret />
					<Tool icon="numbers" label="Numeración" caret />
					<Tool icon="multilevel" label="Lista multinivel" caret />
				</ToolGroup>
				<ToolGroup $width={28}>
					<Tool icon="outdent" label="Disminuir sangría" />
					<Tool icon="indent" label="Aumentar sangría" />
				</ToolGroup>
				<ToolGroup $width={14}>
					<Tool icon="sort" label="Ordenar" />
				</ToolGroup>
				<ToolGroup $width={14}>
					<Tool $bold>¶</Tool>
				</ToolGroup>
			</ToolRow>
			<ToolRow>
				<ToolGroup $width={56}>
					{Object.keys(align).map(kind => (
						<Tool key={kind} label={kind} $active={kind === 'left'}>
							<AlignIcon kind={kind} />
						</Tool>
					))}
				</ToolGroup>
				<ToolGroup $width={19}>
					<Tool icon="spacing" label="Interlineado" caret />
				</ToolGroup>
				<ToolGroup $width={38}>
					<Tool icon="bucket" label="Sombreado" caret />
					<Tool icon="borders" label="Bordes" caret />
				</ToolGroup>
			</ToolRow>
		</ToolColumn>

		<Gallery>
			<StyleList>
				{textStyles.map(({ name, size = 5, color = '#222', italic, bold }, i) => (
					<StyleCard key={name} $active={i === 0}>
						<Preview $size={size} $color={color} $italic={italic} $bold={bold}>
							AaBbCcDdEe
						</Preview>
						<StyleName>{name}</StyleName>
					</StyleCard>
				))}
			</StyleList>
			<IconButton aria-label="Más estilos">
				<svg width="4" height="5" viewBox="0 0 4 5">
					<path d="M0 0l4 2.500L0 5z" fill="#333" />
				</svg>
			</IconButton>
		</Gallery>

		<BigButton $width={26}>
			{icons.stylePane}
			<span>
				Panel de
				<br />
				estilos
			</span>
		</BigButton>
	</Ribbon>
);

const WordWindow = () => (
	<Window>
		<TitleBar>
			<QuickAccess>
				<Lights>
					<Light $color="#f5504c" aria-label="Cerrar" />
					<Light $color="#f9b42a" aria-label="Minimizar" />
					<Light $color="#2fc73c" aria-label="Ampliar" />
				</Lights>
				<IconButton aria-label="Plantillas">{icons.panel}</IconButton>
				<IconButton aria-label="Guardar">{icons.save}</IconButton>
				<IconButton aria-label="Deshacer" $dim>
					{icons.undo}
				</IconButton>
				<IconButton aria-label="Imprimir">{icons.print}</IconButton>
				<AutoSave>
					Autoguardado
					<Toggle type="checkbox" />
				</AutoSave>
				<svg width="5" height="6" viewBox="0 0 5 6">
					<path d="M0 .5h5M0 2h5L2.500 5z" fill="#dfe6f6" stroke="#dfe6f6" strokeWidth=".5" />
				</svg>
			</QuickAccess>
			<DocTitle>Documento1</DocTitle>
			<TitleTools>
				<SearchBox>
					{icons.search}
					<SearchInput placeholder="Buscar en documento" aria-label="Buscar en documento" />
				</SearchBox>
				{icons.smile}
			</TitleTools>
		</TitleBar>
		<TabBar>
			<Tabs>
				{tabs.map((tab, i) => (
					<Tab key={tab} $active={i === 0}>
						{tab}
					</Tab>
				))}
			</Tabs>
			<ShareButton>
				{icons.share}
				Compartir
				<svg width="12" height="6" viewBox="0 0 12 6">
					<path d="M5 4.500L7.500 2 10 4.500" fill="none" stroke="#fff" />
				</svg>
			</ShareButton>
		</TabBar>

		<HomeRibbon />

		<Canvas>
			<Page>
				<TextFrame />
			</Page>
		</Canvas>

		<StatusBar>
			<StatusGroup $gap={9}>
				<span>Página 1 de 1</span>
				<span>0 palabras</span>
				<span>Español (España)</span>
			</StatusGroup>
			<StatusGroup $gap={3}>
				<StatusGroup $gap={0}>
					<ViewButton $active aria-label="Diseño de impresión">
						{icons.printView}
					</ViewButton>
					<ViewButton aria-label="Diseño web">{icons.webView}</ViewButton>
					<ViewButton aria-label="Esquema">{icons.outline}</ViewButton>
					<ViewButton aria-label="Borrador">{icons.draft}</ViewButton>
				</StatusGroup>
				<ViewButton>
					{icons.focus}
					Enfoque
				</ViewButton>
				<StatusGroup $gap={3}>
					<IconButton>−</IconButton>
					<ZoomSlider type="range" min="10" max="180" defaultValue="92" aria-label="Zoom" />
					<IconButton>+</IconButton>
				</StatusGroup>
				<span>92%</span>
			</StatusGroup>
		</StatusBar>
	</Window>
);

const App = () => (
	<>
		<GlobalStyle />
		<Desktop>
			<SystemMenu />
			<WordWindow />
			<Dock>
				<DockApps>
					{dockApps.map(({ name, art }) => (
						<DockIcon key={name} aria-label={name}>
							<svg width="26" height="26" viewBox="0 0 26 26">
								{art}
							</svg>
						</DockIcon>
					))}
				</DockApps>
				<DockTray>
					<DockIcon aria-label="Aplicaciones">
						<svg width="26" height="26" viewBox="0 0 26 26">
							<path d="M1 3h2l1-2h7l1 2h13v23H1z" fill="#5abbe2" />
							<path d="M1 6h24v20H1z" fill="#70cdf0" />
							<path d="M9 20l5-9M12 11l5 9M7 17h12" stroke="#4499bf" strokeWidth="1.5" />
						</svg>
					</DockIcon>
					<DockIcon aria-label="Documento1">
						<svg width="28" height="26" viewBox="0 0 28 26">
							<path d="M0 2h28v21H0z" fill="#f3f5f8" />
							<path d="M0 2h28v3H0z" fill="#7b9acb" />
							<path d="M0 5h4v18H0z" fill="#d7e0ec" />
							<path d="M7 7h10M7 9h6M18 7h6" stroke="#9cb4d5" />
							<rect x="18" y="16" width="9" height="9" fill="#1262cf" />
							<circle cx="22.500" cy="20.500" r="3.700" fill="#fff" />
							<path d="M19 20.500l2.500-2v1.300h2v-1.300l2.500 2-2.500 2v-1.300h-2v1.300z" fill="#1262cf" />
						</svg>
					</DockIcon>
					<DockIcon aria-label="Ventana minimizada">
						<svg width="28" height="26" viewBox="0 0 28 26">
							<path d="M0 4h28v19H0z" fill="#eef1f5" />
							<path d="M0 4h28v2H0z" fill="#d3d8df" />
							<path d="M2 8h8M2 11h6M12 8h10" stroke="#c0c9d4" />
						</svg>
					</DockIcon>
				</DockTray>
			</Dock>
			<DesktopLabel $top={180}>c</DesktopLabel>
			<DesktopLabel $top={304}>S</DesktopLabel>
		</Desktop>
	</>
);

export default App;
